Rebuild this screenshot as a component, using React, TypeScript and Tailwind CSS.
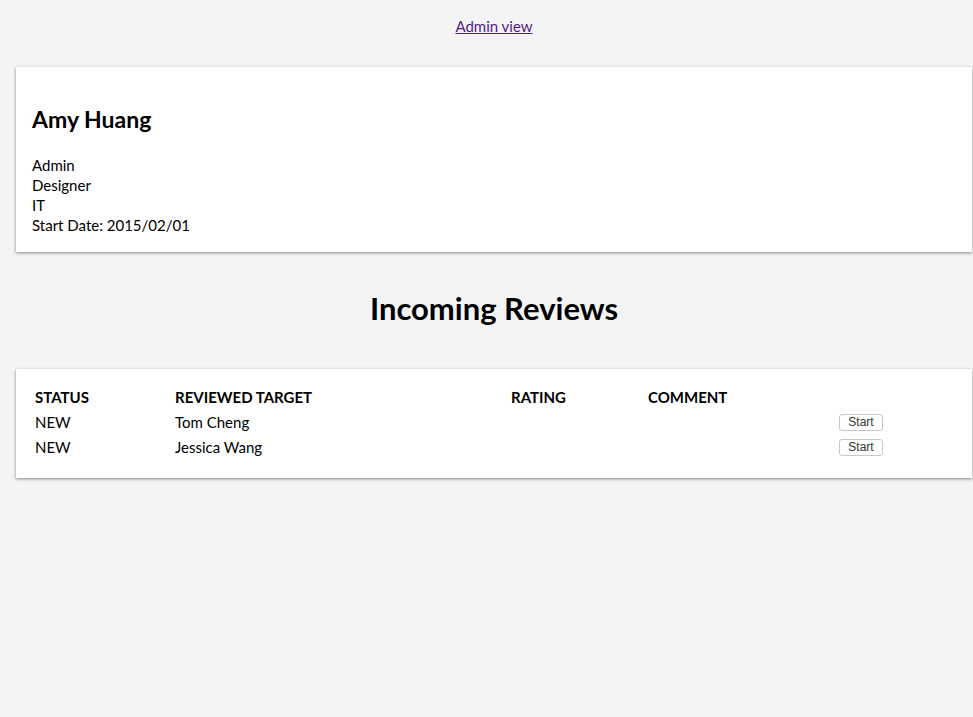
const reviews = [
  { status: "NEW", target: "Tom Cheng" },
  { status: "NEW", target: "Jessica Wang" },
]

export default function App() {
  return (
    <div className="min-h-[717px] bg-[#f4f4f4] pt-[16px] text-black" style={{ fontFamily: "Lato, 'Open Sans', sans-serif" }}>
      <div className="ml-4 mr-px">
        <div className="text-center text-[15px] leading-[20px]">
          <a href="#" className="text-[#551a8b] underline">Admin view</a>
        </div>

        <div className="mt-[31px] bg-white px-4 pt-[37px] pb-[17px] shadow-[0_1px_3px_rgba(0,0,0,0.45)]">
          <h2 className="text-[23px] font-bold leading-[30px]">Amy Huang</h2>
          <div className="mt-[21px] text-[15px] leading-[20px]">
            <div>Admin</div>
            <div>Designer</div>
            <div>IT</div>
            <div>Start Date: 2015/02/01</div>
          </div>
        </div>

        <h1 className="mt-[36px] text-center text-[31px] font-bold leading-[40px]">Incoming Reviews</h1>

        <div className="mt-[41px] bg-white px-[19px] pt-[16px] pb-[18px] shadow-[0_1px_3px_rgba(0,0,0,0.45)]">
          <div className="grid grid-cols-[140px_336px_137px_191px_60px] text-[15px] leading-[25px]">
            <div className="font-bold">STATUS</div>
            <div className="font-bold">REVIEWED TARGET</div>
            <div className="font-bold">RATING</div>
            <div className="font-bold">COMMENT</div>
            <div></div>
            {reviews.map((r) => (
              <>
                <div key={r.target + "s"}>{r.status}</div>
                <div>{r.target}</div>
                <div></div>
                <div></div>
                <div className="flex items-center">
                  <button className="h-[17px] w-[44px] rounded-[3px] border border-[#c8c8c8] bg-white text-[12px] leading-[15px] text-[#333]" style={{ fontFamily: "'Liberation Sans', sans-serif" }}>
                    Start
                  </button>
                </div>
              </>
            ))}
          </div>
        </div>
      </div>
    </div>
  )
}
